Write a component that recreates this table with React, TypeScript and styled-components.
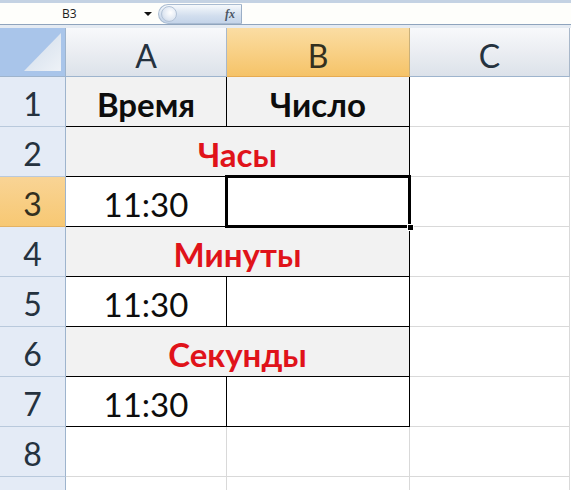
import React from "react";
import styled, { createGlobalStyle, css } from "styled-components";

const Global = createGlobalStyle`
  html, body { margin: 0; padding: 0; background: #ffffff; overflow: hidden; }
  #root { width: 571px; height: 490px; }
`;

const Page = styled.div`
  width: 571px;
  height: 490px;
  overflow: hidden;
  background: #ffffff;
  font-family: Lato, "Open Sans", sans-serif;
`;

const TopBar = styled.div`
  height: 21px;
  border-top: 3px solid #c4d2e3;
  border-bottom: 1px solid #8fa4bd;
  background: #fefefb;
  display: flex;
  align-items: stretch;
`;

const NameBox = styled.div`
  width: 158px;
  display: flex;
  align-items: center;
  padding-left: 62px;
  box-sizing: border-box;
  font-family: "Open Sans", "Liberation Sans", sans-serif;
  font-size: 12px;
  color: #1d1d1d;
`;

const NameText = styled.span`
  flex: 1;
`;

const DropArrow = styled.span`
  width: 0;
  height: 0;
  border-left: 4px solid transparent;
  border-right: 4px solid transparent;
  border-top: 4px solid #111;
  margin-right: 6px;
`;

const FxPill = styled.div`
  width: 84px;
  margin: 1px 0 0;
  border: 1px solid #a9bbd1;
  border-right: 1px solid #9aaec6;
  border-radius: 10px 0 0 10px;
  background: linear-gradient(#f6f9fc, #d2deee 60%, #c4d4e9);
  display: flex;
  align-items: center;
  justify-content: space-between;
  box-sizing: border-box;
  padding: 0 6px 0 2px;
`;

const Grip = styled.span`
  width: 14px;
  height: 14px;
  border-radius: 50%;
  background: radial-gradient(circle at 60% 40%, #ffffff, #dfe7f2 60%, #b9c9dd);
  border: 1px solid #b3c3d7;
`;

const Fx = styled.span`
  font-family: "Liberation Serif", serif;
  font-style: italic;
  font-weight: bold;
  font-size: 12px;
  color: #4b5563;
`;

const Gap = styled.div`
  height: 3px;
  background: #e5ebf2;
`;

const Sheet = styled.div`
  display: grid;
  grid-template-columns: 66px 161px 183px 160px 1px;
  grid-template-rows: 49px repeat(8, 50px) 20px;
`;

const Corner = styled.div`
  box-sizing: border-box;
  background: #a9c5ea;
  border-right: 1px solid #9eb4cd;
  border-bottom: 1px solid #9eb4cd;
  position: relative;
  &::after {
    content: "";
    position: absolute;
    left: 24px;
    top: 5px;
    width: 37px;
    height: 38px;
    background: linear-gradient(135deg, #cfdbea, #eef2f7);
    clip-path: polygon(100% 0, 100% 100%, 0 100%);
  }
`;

const ColHeader = styled.div<{ $selected?: boolean }>`
  box-sizing: border-box;
  display: flex;
  align-items: center;
  justify-content: center;
  padding-top: 6px;
  font-size: 32px;
  border-right: 1px solid #a9b8ca;
  border-bottom: 1px solid #9eb4cd;
  color: #25323f;
  background: linear-gradient(#f8f9fb, #e9ecf1 55%, #dce2ea);
  ${(p) =>
    p.$selected &&
    css`
      color: #33301f;
      background: linear-gradient(#fbdda3, #f8cf83 55%, #f5c368);
      border-bottom-color: #e6ab52;
      border-right-color: #c9b07a;
    `}
`;

const Filler = styled.div`
  background: #ffffff;
`;

const RowHeader = styled.div<{ $selected?: boolean }>`
  box-sizing: border-box;
  display: flex;
  align-items: center;
  justify-content: center;
  padding-top: 4px;
  font-size: 32px;
  color: #25323f;
  background: #e4ebf6;
  border-right: 1px solid #9eb4cd;
  border-bottom: 1px solid #b9c9dc;
  ${(p) =>
    p.$selected &&
    css`
      color: #33301f;
      background: linear-gradient(#f9d495, #f7c873);
      border-bottom-color: #e3b264;
    `}
`;

const Cell = styled.div<{
  $fill?: boolean;
  $black?: boolean;
  $span?: number;
  $bold?: boolean;
  $red?: boolean;
}>`
  box-sizing: border-box;
  position: relative;
  display: flex;
  align-items: center;
  justify-content: center;
  padding-top: 4px;
  grid-column: span ${(p) => p.$span ?? 1};
  font-size: 33px;
  font-weight: ${(p) => (p.$bold ? 700 : 400)};
  color: ${(p) => (p.$red ? "#e0131a" : "#0d0d0d")};
  background: ${(p) => (p.$fill ? "#f2f2f2" : "#ffffff")};
  border-right: 1px solid ${(p) => (p.$black ? "#000000" : "#d9d9d9")};
  border-bottom: 1px solid ${(p) => (p.$black ? "#000000" : "#d9d9d9")};
`;

const SelectedCell = styled(Cell)`
  z-index: 2;
`;

const Selection = styled.div`
  position: absolute;
  left: -2px;
  top: -2px;
  right: -2px;
  bottom: -2px;
  border: 3px double #000000;
  pointer-events: none;
  &::after {
    content: "";
    position: absolute;
    right: -6px;
    bottom: -6px;
    width: 5px;
    height: 5px;
    background: #000;
    border: 1px solid #fff;
  }
`;

const cols = ["A", "B", "C"];

type RowSpec =
  | { kind: "pair"; a: string; b: string; fill?: boolean; bold?: boolean; selB?: boolean }
  | { kind: "merged"; text: string }
  | { kind: "empty"; label?: boolean };

const rows: RowSpec[] = [
  { kind: "pair", a: "Время", b: "Число", fill: true, bold: true },
  { kind: "merged", text: "Часы" },
  { kind: "pair", a: "11:30", b: "", selB: true },
  { kind: "merged", text: "Минуты" },
  { kind: "pair", a: "11:30", b: "" },
  { kind: "merged", text: "Секунды" },
  { kind: "pair", a: "11:30", b: "" },
  { kind: "empty", label: true },
  { kind: "empty", label: false },
];

export default function App() {
  return (
    <Page>
      <Global />
      <TopBar>
        <NameBox>
          <NameText>B3</NameText>
          <DropArrow />
        </NameBox>
        <FxPill>
          <Grip />
          <Fx>fx</Fx>
        </FxPill>
      </TopBar>
      <Gap />
      <Sheet>
        <Corner />
        {cols.map((c) => (
          <ColHeader key={c} $selected={c === "B"}>
            {c}
          </ColHeader>
        ))}
        <Filler />
        {rows.map((r, i) => {
          const n = i + 1;
          const showLabel = r.kind !== "empty" || r.label;
          const header = (
            <RowHeader key={`h${n}`} $selected={n === 3}>
              {showLabel ? n : ""}
            </RowHeader>
          );
          if (r.kind === "pair") {
            const BCell = r.selB ? SelectedCell : Cell;
            return (
              <React.Fragment key={n}>
                {header}
                <Cell $black $fill={r.fill} $bold={r.bold}>
                  {r.a}
                </Cell>
                <BCell $black $fill={r.fill} $bold={r.bold}>
                  {r.b}
                  {r.selB && <Selection />}
                </BCell>
                <Cell />
                <Filler />
              </React.Fragment>
            );
          }
          if (r.kind === "merged") {
            return (
              <React.Fragment key={n}>
                {header}
                <Cell $black $fill $bold $red $span={2}>
                  {r.text}
                </Cell>
                <Cell />
                <Filler />
              </React.Fragment>
            );
          }
          return (
            <React.Fragment key={n}>
              {header}
              <Cell />
              <Cell />
              <Cell />
              <Filler />
            </React.Fragment>
          );
        })}
      </Sheet>
    </Page>
  );
}
